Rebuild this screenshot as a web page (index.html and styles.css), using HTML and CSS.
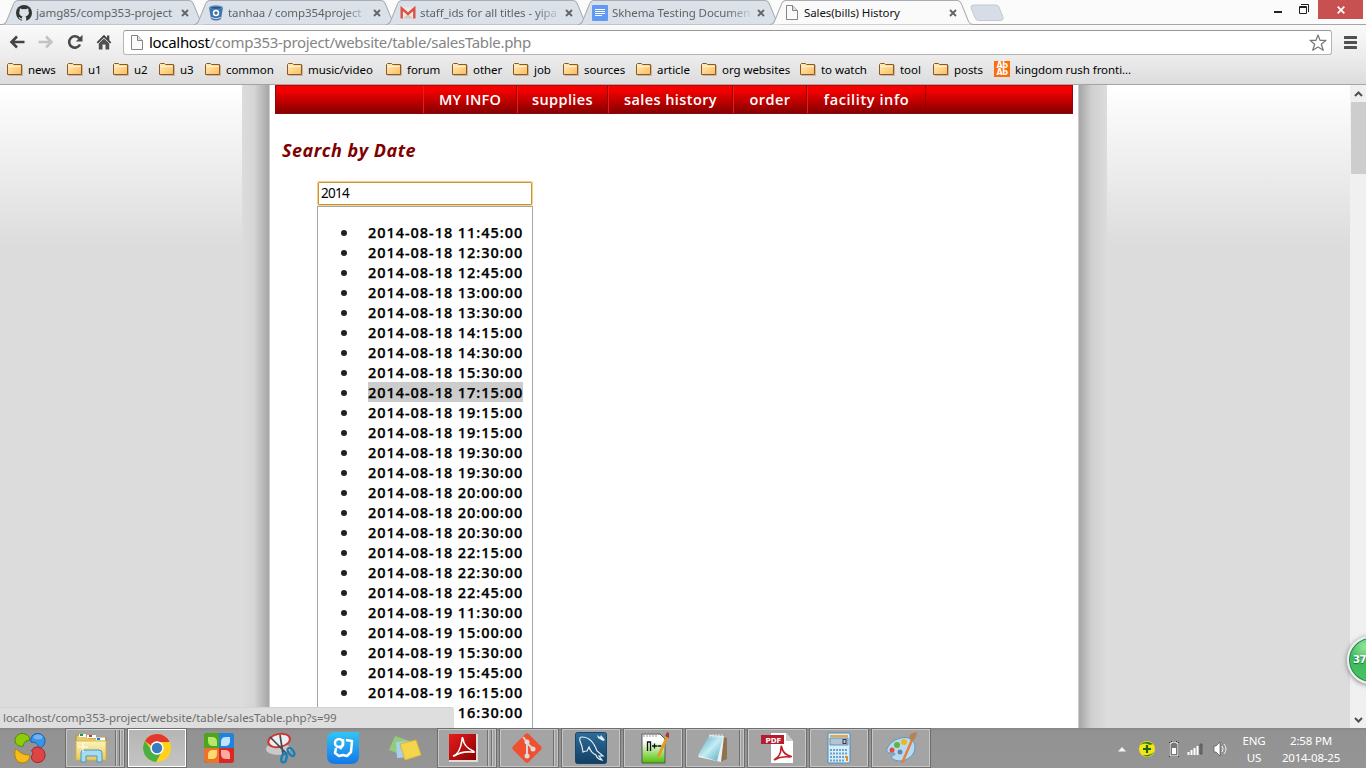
FILE: index.html
```html
<!DOCTYPE html>
<html lang="en">
<head>
<meta charset="utf-8">
<title>Sales(bills) History</title>
<link rel="stylesheet" href="styles.css">
</head>
<body>
<svg class="defs" width="0" height="0" aria-hidden="true">
  <defs>
    <linearGradient id="gFolder" x1="0" y1="0" x2="1" y2="1"><stop offset="0" stop-color="#ffeec0"/><stop offset="1" stop-color="#fdbb5c"/></linearGradient>
    <linearGradient id="gYellow" x1="0" y1="0" x2="0" y2="1"><stop offset="0" stop-color="#fdf3bd"/><stop offset="1" stop-color="#e8c95a"/></linearGradient>
    <linearGradient id="gBlue" x1="0" y1="0" x2="0" y2="1"><stop offset="0" stop-color="#31c4f5"/><stop offset="1" stop-color="#1478e8"/></linearGradient>
    <linearGradient id="gRed" x1="0" y1="0" x2="1" y2="1"><stop offset="0" stop-color="#e81d1d"/><stop offset="1" stop-color="#8a0000"/></linearGradient>
    <linearGradient id="gNavy" x1="0" y1="0" x2="0" y2="1"><stop offset="0" stop-color="#2c6d9c"/><stop offset="1" stop-color="#123f62"/></linearGradient>
    <linearGradient id="gGreen" x1="0" y1="0" x2="0" y2="1"><stop offset=".25" stop-color="#fff"/><stop offset="1" stop-color="#4fc100"/></linearGradient>
    <linearGradient id="gTeal" x1="0" y1="0" x2="1" y2="1"><stop offset="0" stop-color="#4d9db2"/><stop offset=".5" stop-color="#c5edf5"/><stop offset="1" stop-color="#4fa5b8"/></linearGradient>
    <symbol id="folder" viewBox="0 0 16 14"><path d="M.5 12.5v-10l1-1h4l1 1h8v10z" fill="url(#gFolder)" stroke="#8a5a25"/><path d="M1.5 4.5h12" stroke="#fff3d2"/><path d="M15.5 3v10.5h-14" fill="none" stroke="#b69a79" opacity=".6"/></symbol>
    <symbol id="page" viewBox="0 0 12 15"><path d="M.5.5h6l5 5v9H.5z" fill="#fafafa" stroke="#858585"/><path d="M6.5.5v5h5" fill="#ddd" stroke="#858585"/></symbol>
    <symbol id="close" viewBox="0 0 8 8"><path d="M1 1l6 6M7 1L1 7" stroke="#636363" stroke-width="1.8"/></symbol>
    <symbol id="tab" viewBox="0 0 202 25" preserveAspectRatio="none"><path d="M0 24.5C3 24.5 4 23 5 20L11 5C12 2 13 .5 16 .5H185C188 .5 189 2 190 5L196 20C197 23 198 24.5 202 24.5"/></symbol>
  </defs>
</svg>
<div class="screen">
  <header class="tabs">
    <div class="tab"><svg class="shape"><use href="#tab"/></svg>
      <svg class="fav" viewBox="0 0 16 16"><circle cx="8" cy="8" r="8" fill="#333"/><path d="M4 3.2l2 1q2-.5 4 0l2-1q.8 1.500.3 2.700 1 1.300.4 3.200-.7 2-3.200 2.300.8.8.7 2v2.400q-2.200.6-4.400 0v-1.500q-2 .5-2.600-1.200l-.7-1q1.200-.2 1.800 1 .7.600 1.500.1.100-1 .7-1.800-2.500-.4-3.100-2.300-.5-2 .4-3.200-.4-1.400.2-2.700z" fill="#dbe1e9"/></svg>
      <span class="label">jamg85/comp353-project</span><svg class="x"><use href="#close"/></svg></div>
    <div class="tab"><svg class="shape"><use href="#tab"/></svg>
      <svg class="fav" viewBox="0 0 16 16"><path d="M1 2.500L3 14q5 3 10 0l2-11.500z" fill="#3e73ac"/><ellipse cx="8" cy="2.500" rx="7" ry="2.200" fill="#5e8fc2"/><ellipse cx="8" cy="2.700" rx="5" ry="1" fill="#245488"/><circle cx="8" cy="8" r="2.500" fill="#3e73ac" stroke="#fff" stroke-width="1.500"/><path d="M3 12.500q5 2.500 10 0" fill="none" stroke="#dbe1e9"/></svg>
      <span class="label faded">tanhaa / comp354project</span><svg class="x"><use href="#close"/></svg></div>
    <div class="tab"><svg class="shape"><use href="#tab"/></svg>
      <svg class="fav" viewBox="0 0 16 16"><path d="M1 2.500h14v11H1z" fill="#eee9e2"/><path d="M3 13.500l5-5 5 5z" fill="#d2ccc0"/><path d="M1.700 13.500V3.500L8 9l6.300-5.500v10" fill="none" stroke="#dc5145" stroke-width="2.400"/></svg>
      <span class="label faded">staff_ids for all titles - yipa</span><svg class="x"><use href="#close"/></svg></div>
    <div class="tab"><svg class="shape"><use href="#tab"/></svg>
      <svg class="fav" viewBox="0 0 16 16"><rect width="16" height="16" rx="1" fill="#6199f3"/><path d="M3 4.500h10M3 6.500h10M3 8.500h10M3 10.500h7" stroke="#fff"/></svg>
      <span class="label faded">Skhema Testing Documen</span><svg class="x"><use href="#close"/></svg></div>
    <div class="tab active"><svg class="shape"><use href="#tab"/></svg>
      <svg class="fav narrow"><use href="#page"/></svg>
      <span class="label">Sales(bills) History</span><svg class="x"><use href="#close"/></svg></div>
    <svg class="newtab" viewBox="0 0 34 18"><path d="M4 1h22q2 0 3 2l4 10q1 3-2 3.500H9q-3 0-4-3L1 4Q.5 1 4 1z" fill="#d6dde7" stroke="#c5cad1"/></svg>
    <div class="window">
      <svg class="min" viewBox="0 0 8 2"><path d="M0 1h8" stroke="#222" stroke-width="2"/></svg>
      <svg class="restore" viewBox="0 0 10 10"><path d="M2 .5h7.500V8M.5 2.500h7v7h-7z" fill="none" stroke="#222"/><path d="M0 3.500h8" stroke="#222"/></svg>
      <span class="closewin"><svg viewBox="0 0 8 8"><path d="M.7.7l6.600 6.600M7.300.7L.7 7.300" stroke="#fff" stroke-width="1.700"/></svg></span>
    </div>
  </header>

  <div class="toolbar">
    <svg class="tool" viewBox="0 0 16 16"><path d="M15.500 8H3M8 2.500L2.500 8 8 13.500" fill="none" stroke="#444" stroke-width="2.600"/></svg>
    <svg class="tool" viewBox="0 0 16 16"><path d="M.5 8H13M8 2.500L13.500 8 8 13.500" fill="none" stroke="#c3c3c3" stroke-width="2.600"/></svg>
    <svg class="tool" viewBox="0 0 16 16"><path d="M13 10.500A5.700 5.700 0 1 1 12.400 4.500" fill="none" stroke="#4a4a4a" stroke-width="2.600"/><path d="M15.500.7V7.400H8.800z" fill="#4a4a4a"/></svg>
    <svg class="tool home" viewBox="0 0 16 16"><path d="M8 .8L.7 8.300l1.200 1.200L8 3.600l6.100 5.900 1.200-1.200-2-2V1.500h-2.200V4z" fill="#444"/><path d="M2.800 9.500L8 4.600l5.200 4.900v6H9.500v-5h-3v5H2.800z" fill="#505050"/></svg>
    <div class="omnibox"><svg class="pageicon"><use href="#page"/></svg><span class="url"><b>localhost</b>/comp353-project/website/table/salesTable.php</span>
      <svg class="star" viewBox="0 0 18 18"><path d="M9 1l2 5.300h6l-4.700 3.900 2 6.100L9 13l-5.300 3.300 2-6.100L1 6.300h6z" fill="#fff" stroke="#777" stroke-width="1.200" stroke-linejoin="round"/></svg></div>
    <svg class="menu" viewBox="0 0 13 13"><path d="M1 1.500h11M1 6.500h11M1 11.500h11" stroke="#505050" stroke-width="3" stroke-linecap="round"/></svg>
  </div>

  <nav class="bookmarks">
    <span><svg><use href="#folder"/></svg>news</span><span><svg><use href="#folder"/></svg>u1</span><span><svg><use href="#folder"/></svg>u2</span><span><svg><use href="#folder"/></svg>u3</span><span><svg><use href="#folder"/></svg>common</span><span><svg><use href="#folder"/></svg>music/video</span><span><svg><use href="#folder"/></svg>forum</span><span><svg><use href="#folder"/></svg>other</span><span><svg><use href="#folder"/></svg>job</span><span><svg><use href="#folder"/></svg>sources</span><span><svg><use href="#folder"/></svg>article</span><span><svg><use href="#folder"/></svg>org websites</span><span><svg><use href="#folder"/></svg>to watch</span><span><svg><use href="#folder"/></svg>tool</span><span><svg><use href="#folder"/></svg>posts</span><span><i class="abab">Ab<br>Ab</i>kingdom rush fronti...</span>
  </nav>

  <div class="viewport">
    <div class="side"></div>
    <div class="center">
      <main class="sheet">
        <nav class="mainmenu"><a>MY INFO</a><a>supplies</a><a>sales history</a><a>order</a><a>facility info</a></nav>
        <h2>Search by Date</h2>
        <div class="search">2014</div>
        <ul class="results">
          <li><a>2014-08-18 11:45:00</a></li><li><a>2014-08-18 12:30:00</a></li><li><a>2014-08-18 12:45:00</a></li><li><a>2014-08-18 13:00:00</a></li><li><a>2014-08-18 13:30:00</a></li><li><a>2014-08-18 14:15:00</a></li><li><a>2014-08-18 14:30:00</a></li><li><a>2014-08-18 15:30:00</a></li><li><a class="hover">2014-08-18 17:15:00</a></li><li><a>2014-08-18 19:15:00</a></li><li><a>2014-08-18 19:15:00</a></li><li><a>2014-08-18 19:30:00</a></li><li><a>2014-08-18 19:30:00</a></li><li><a>2014-08-18 20:00:00</a></li><li><a>2014-08-18 20:00:00</a></li><li><a>2014-08-18 20:30:00</a></li><li><a>2014-08-18 22:15:00</a></li><li><a>2014-08-18 22:30:00</a></li><li><a>2014-08-18 22:45:00</a></li><li><a>2014-08-19 11:30:00</a></li><li><a>2014-08-19 15:00:00</a></li><li><a>2014-08-19 15:30:00</a></li><li><a>2014-08-19 15:45:00</a></li><li><a>2014-08-19 16:15:00</a></li><li><a>2014-08-19 16:30:00</a></li><li><a>2014-08-19 18:00:00</a></li>
        </ul>
      </main>
    </div>
    <div class="side right"></div>
    <div class="scrollbar"><svg viewBox="0 0 9 6"><path d="M1 5l3.500-3.500L8 5" fill="none" stroke="#505050" stroke-width="2"/></svg><div class="thumb"></div><svg class="down" viewBox="0 0 9 6"><path d="M1 1l3.500 3.500L8 1" fill="none" stroke="#505050" stroke-width="2"/></svg></div>
    <div class="status">localhost/comp353-project/website/table/salesTable.php?s=99</div>
    <div class="ball">37</div>
  </div>

  <footer class="taskbar">
    <div class="apps">
      <div class="app left"><svg viewBox="0 0 32 32"><path d="M8 1.500c5 0 8 3 7.500 7-4 0-6 2-6 5.500C5 15.500 1 12 1 8.500 1 5 4 1.500 8 1.500z" fill="#8ecb08" stroke="#4b8a0c"/><path d="M23.500 1.500c4 0 7.500 3 7.500 7 0 5-3 7.500-6.500 7.500 0-4-3-6-7.500-6-1-4.500 2-8.500 6.500-8.500z" fill="#3794ea" stroke="#165fae"/><path d="M1.500 17c3.500 1 4.500 6 14 6 1 3-2 8-7 8-7 0-9-8-7-14z" fill="#f6bd16" stroke="#b87f0b"/><path d="M23.500 15c4 0 7.500 3.500 7.500 8s-3 7.500-7.500 7.500c-4 0-6.500-3-6-6.500 1.500-1 2-4.500 0-5 1-2.500 3-4 6-4z" fill="#dd4545" stroke="#9b2525"/><ellipse cx="24" cy="5" rx="4.500" ry="2.500" fill="#fff" opacity=".3"/></svg></div>
      <div class="app open stack2"><svg viewBox="0 0 32 32"><path d="M1 3h10l2 3h18v22H1z" fill="#e6ca6d" stroke="#a88e3c"/><path d="M4 3.500h7M12 4.500h9M21 7h9" stroke="#fff" stroke-width="3"/><path d="M5 3h3" stroke="#1a9c46" stroke-width="2"/><path d="M14 4h3" stroke="#c33" stroke-width="2"/><path d="M22 7h3" stroke="#1d7dcc" stroke-width="2"/><path d="M1 9h30v19H1z" fill="url(#gYellow)" stroke="#d6b854"/><path d="M6 30v-9q0-3 3-3h15q3 0 3 3v9h-5v-6H11v6z" fill="#a5dcf1" stroke="#4897bb"/><path d="M8 10v10M3 15h10" stroke="#fff"/></svg></div>
      <div class="app open active"><svg viewBox="0 0 32 32"><circle cx="16" cy="16" r="14" fill="#ffd21c"/><path d="M3.900 9A14 14 0 0 1 28.600 10H16a6 6 0 0 0-5.500 4z" fill="#e1392d"/><path d="M3.900 9A14 14 0 0 0 15 30l5.500-10a6 6 0 0 1-9.500-1.500z" fill="#4caf45"/><circle cx="16" cy="16" r="6.700" fill="#fff"/><circle cx="16" cy="16" r="5.200" fill="#377bc0"/></svg></div>
      <div class="app"><svg viewBox="0 0 32 32"><rect x="1" y="1" width="30" height="30" rx="4" fill="#176d15"/><path d="M4 1h12v15H1V5q0-4 3-4z" fill="#4da51e"/><path d="M16 1h12q3 0 3 3v12H16z" fill="#2083dd"/><path d="M1 16h15v15H5q-4 0-4-4z" fill="#e9752d"/><path d="M16 16h15v12q0 3-3 3H16z" fill="#d92923"/><path d="M5 5h4q5 0 5 5v4h-4q-5 0-5-5z" fill="#b5e86b"/><path d="M27 5h-4q-5 0-5 5v4h4q5 0 5-5z" fill="#bfe4ff"/><path d="M5 27v-4q0-5 5-5h4v4q0 5-5 5z" fill="#ffd873"/><path d="M27 27v-4q0-5-5-5h-4v4q0 5 5 5z" fill="#ffaaa2"/></svg></div>
      <div class="app"><svg viewBox="0 0 32 32"><ellipse cx="13" cy="17" rx="12" ry="6" fill="#c9c9c9"/><ellipse cx="14" cy="8.500" rx="11" ry="6.500" fill="#eee" stroke="#cf3634" stroke-width="2" transform="rotate(-12 14 8)"/><path d="M5 5l17 17M15 3l3 19" stroke="#424b55" stroke-width="1.700"/><ellipse cx="26" cy="20" rx="2.500" ry="4.500" fill="none" stroke="#187eb7" stroke-width="2.300" transform="rotate(-35 26 20)"/><ellipse cx="19" cy="26" rx="2.500" ry="4.500" fill="none" stroke="#187eb7" stroke-width="2.300" transform="rotate(12 19 26)"/></svg></div>
      <div class="app"><svg viewBox="0 0 32 32"><path d="M8 0h24v24q0 8-8 8H8q-8 0-8-8V8q0-8 8-8z" fill="url(#gBlue)"/><circle cx="12" cy="11" r="4" fill="none" stroke="#fff" stroke-width="2.500"/><path d="M16 7v6l-3 4M9 16l-1 5 4 3 4-1 4 1 4-4 1-11-6-1" fill="none" stroke="#fff" stroke-width="2.500" stroke-linejoin="round"/></svg></div>
      <div class="app"><svg viewBox="0 0 32 32"><path d="M6 4l15 5-5 15L0 18z" fill="#91cc79"/><path d="M7 10l15-1 1 16-15 1z" fill="#a7d0f0"/><path d="M11 12l16-4 5 15-16 5z" fill="#f3d64d" stroke="#dbb534"/></svg></div>
      <div class="app open stack2"><svg viewBox="0 0 32 32"><path d="M2 2h29v28H2z" fill="#ddd"/><path d="M2 2h27v26H2z" fill="url(#gRed)"/><path d="M6 24q7-2 9-16 0-4 1-1 1 8 10 12 3 2-2 1-9-1-17 4z" fill="none" stroke="#fff" stroke-width="1.600"/></svg></div>
      <div class="app open stack1"><svg viewBox="0 0 32 32"><rect x="5" y="5" width="22" height="22" rx="2" fill="#f0502f" transform="rotate(45 16 16)"/><path d="M12 5l4 5v14M16 11l6 6" stroke="#d8d5d2" stroke-width="2" fill="none"/><circle cx="16" cy="10" r="2.500" fill="#ddd"/><circle cx="22" cy="17" r="2.500" fill="#ddd"/><circle cx="16" cy="24" r="2.500" fill="#ddd"/></svg></div>
      <div class="app open"><svg viewBox="0 0 32 32"><rect x=".5" y=".5" width="31" height="31" rx="2" fill="url(#gNavy)" stroke="#164768"/><path d="M8 20Q7 13 5 9q-1-4 2-4 10 0 15 14l6 5-4 0 3 4q-5-1-6-5-5-2-7-8l-2 4q-2 0-4 1z" fill="none" stroke="#e5eff5" stroke-width="1.200"/><path d="M22 3l3 2 1-2 4 5-2 1-5-3z" fill="#e3edf3"/></svg></div>
      <div class="app open"><svg viewBox="0 0 32 32"><path d="M5 2h18l5 5v24H5z" fill="url(#gGreen)" stroke="#555"/><path d="M7 1v4M10 1v4M13 1v4M16 1v4M19 1v4" stroke="#999"/><path d="M10.500 19v-9h3v9M15 14h5M17.500 11.500v5M20.500 14h4" stroke="#111" stroke-width="1.300" fill="none"/><path d="M21 25L31 3" stroke="#e49d24" stroke-width="3"/><path d="M30 5l2-4" stroke="#a63741" stroke-width="4"/></svg></div>
      <div class="app open stack1"><svg viewBox="0 0 32 32"><path d="M26 5l4 1v21l-7 3z" fill="#8d7350"/><path d="M13 3l14 1-3 26-23-5z" fill="#ecf1f2"/><path d="M12 4l14 1-6 24-19-6z" fill="url(#gTeal)"/><path d="M13 2v4M16 2v4M19 2v4M22 2v4M25 2v4" stroke="#e5e5e5"/></svg></div>
      <div class="app open"><svg viewBox="0 0 32 32"><path d="M10 1h15l7 8v22H10z" fill="#fff"/><path d="M25 1v8h7z" fill="#ccc"/><path d="M0 3h23v9H0z" fill="#b51c2d"/><text x="4.500" y="10.500" class="pdf">PDF</text><path d="M13 28q7-4 7-12 0-4 1 0 1 6 8 8 3 1-1 1-8-1-15 3z" fill="none" stroke="#c01f26" stroke-width="1.600"/></svg></div>
      <div class="app open"><svg viewBox="0 0 32 32"><rect x="5" y="1" width="22" height="30" rx="1" fill="#d9edf8" stroke="#4c8cbc"/><path d="M7 4h18" stroke="#f0a634" stroke-width="2"/><path d="M7 6h18v7H7z" fill="#adc6d8" stroke="#6c8fa6"/><rect x="20" y="7.500" width="3" height="4" fill="none" stroke="#435"/><path d="M7 18h18M7 21.500h18M7 25h18M7 28.500h14" stroke="#6aa3cc" stroke-width="1.800" stroke-dasharray="2 1"/><path d="M24 24v5" stroke="#ef8b1b" stroke-width="2"/></svg></div>
      <div class="app open"><svg viewBox="0 0 32 32"><path d="M16 6c8-2 14 2 14 9 0 9-8 14-16 14-8-1-9-5-5-6 3-1 0-3-5-2C-2 20 5 8 16 6z" fill="#b8daf1" stroke="#5799c9"/><circle cx="7" cy="18" r="2.500" fill="#e54c40"/><circle cx="12" cy="13" r="3" fill="#63b43c"/><circle cx="19" cy="10" r="3" fill="#f4b51c"/><circle cx="15" cy="20" r="2.500" fill="#6488af"/><path d="M17 31L27 8" stroke="#e1823c" stroke-width="2.500"/><path d="M26 9q-3-5 0-7 5-3 6-1-1 7-6 8z" fill="#b58356"/></svg></div>
    </div>
    <div class="tray">
      <svg class="up" viewBox="0 0 8 5"><path d="M4 0l4 4.500H0z" fill="#f4f4f4"/></svg>
      <svg class="shield" viewBox="0 0 16 16"><circle cx="8" cy="8" r="8" fill="#f5e414"/><path d="M1 4q6-6 13-1l-3 1Q6 1 1 4zM15 11q-5 7-12 3 7 1 12-3z" fill="#32811d"/><path d="M8 4v8M4 8h8" stroke="#176319" stroke-width="2.200"/></svg>
      <svg class="battery" viewBox="0 0 10 16"><path d="M3 2V.7h4V2h2v13H1V2z" fill="#777" stroke="#333" stroke-width="2"/><path d="M3 2V1h4v1h2v13H1V2z" fill="#777" stroke="#fff"/><path d="M3 7h4v6H3z" fill="#fff"/></svg>
      <svg class="signal" viewBox="0 0 16 12"><path d="M1.500 9v3M4.500 7v5M7.500 5v7M10.500 3v9" stroke="#fff" stroke-width="2"/><path d="M13 1h2v10h-2z" fill="#777" stroke="#555"/></svg>
      <svg class="speaker" viewBox="0 0 14 16"><path d="M1 5h2l4-4v14l-4-4H1z" fill="#fff" stroke="#555" stroke-width=".7"/><path d="M9 5q2 3 0 6M11 3q4 5 0 10" stroke="#eee" fill="none"/></svg>
      <div class="lang">ENG<br>US</div>
      <div class="clock">2:58 PM<br>2014-08-25</div>
    </div>
  </footer>
</div>
</body>
</html>
```
FILE: styles.css
```css
* { box-sizing: border-box; }
body { margin: 0; font-family: "Noto Sans", "Open Sans", sans-serif; overflow: hidden; }
svg { display: block; flex: none; }
.defs { position: absolute; }
.screen { width: 1366px; height: 768px; display: flex; flex-direction: column; overflow: hidden; }

.tabs { flex: none; height: 25px; background: #fbfbfb; border-bottom: 1px solid #a6a6a6; display: flex; padding-left: 2px; }
.tab { position: relative; width: 204px; height: 25px; margin-right: -12px; padding: 0 17px 0 14px; display: flex; align-items: center; flex: none; }
.tab .shape { position: absolute; inset: 0; width: 204px; height: 25px; fill: #dbe1e9; stroke: #a9adb3; }
.tab.active { z-index: 2; }
.tab.active .shape { fill: #fafafa; }
.fav { position: relative; width: 16px; height: 16px; margin-top: 1px; }
.fav.narrow { width: 12px; height: 15px; margin: 0 2px; }
.label { position: relative; margin-left: 4px; width: 140px; height: 18px; line-height: 18px; font-size: 11.5px; white-space: nowrap; color: #626262; margin-top: 1px; }
.label.faded { width: 140px; letter-spacing: -.1px; -webkit-mask-image: linear-gradient(90deg, #000 116px, transparent 142px); mask-image: linear-gradient(90deg, #000 116px, transparent 142px); }
.active .label { color: #111; letter-spacing: -.1px; }
.x { position: relative; width: 8px; height: 8px; margin: 1px 0 0 auto; }
.newtab { width: 34px; height: 18px; margin: 4px 0 0 8px; }
.window { margin-left: auto; display: flex; align-items: flex-start; }
.min { width: 8px; height: 2px; margin: 11px 17px 0 0; }
.restore { width: 10px; height: 10px; margin: 4px 9px 0 0; }
.closewin { width: 45px; height: 19px; background: #c75050; margin-right: 3px; display: flex; align-items: center; justify-content: center; }
.closewin svg { width: 8px; height: 8px; }

.toolbar { flex: none; height: 32px; padding: 0 9px; background: linear-gradient(#fafafa, #ececec); display: flex; align-items: center; }
.tool { width: 16px; height: 16px; margin-right: 13px; margin-top: 2px; }
.tool.home { margin-right: 11px; }
.omnibox { width: 1209px; height: 25px; margin-top: 3px; border: 1px solid #b4b4b4; border-top-color: #999; border-radius: 3px; background: #fff; display: flex; align-items: center; padding: 0 4px 0 7px; }
.pageicon { width: 12px; height: 15px; }
.url { margin-left: 6px; font-size: 15px; line-height: 22px; color: #858585; letter-spacing: -.31px; white-space: nowrap; padding-bottom: 2px; }
.url b { font-weight: 400; color: #000; }
.star { width: 18px; height: 18px; margin-left: auto; }
.menu { width: 13px; height: 13px; margin: 3px 0 0 12px; }

.bookmarks { flex: none; height: 28px; padding-left: 7px; background: linear-gradient(#ececec, #dcdcdc); border-bottom: 1px solid #a5a5a5; display: grid; grid-template-columns: 60px 46px 46px 46px 82px 99px 66px 61px 50px 73px 65px 99px 79px 54px 61px 160px; }
.bookmarks span { display: flex; align-items: center; gap: 5px; font-size: 11.5px; letter-spacing: -.06px; color: #000; white-space: nowrap; padding-bottom: 3px; }
.bookmarks svg { width: 16px; height: 14px; }
.abab { width: 16px; height: 16px; background: #ff6c0a; color: #fff; font: bold 8px/7px "DejaVu Sans", sans-serif; padding-top: 1px; text-align: center; letter-spacing: -.5px; }

.viewport { position: relative; flex: none; height: 643px; display: flex; background: #dcdcdc; overflow: hidden; }
.side { width: 242px; background: linear-gradient(#fff, #dcdcdc 162px); }
.side.right { width: 243px; }
.center { width: 865px; padding: 0 28px 0 27px; background: linear-gradient(90deg, #dcdcdc, #d5d5d5 12px, #a6a6a6 27px, #a6a6a6 837px, #d0d0d0 850px, #dcdcdc); }
.sheet { width: 810px; height: 643px; background: #fff; border: 1px solid #ccc; border-width: 0 1px; padding: 0 5px; font-family: "Open Sans", "Noto Sans", sans-serif; }
.mainmenu { height: 29px; background: linear-gradient(#f90000, #ec0000 6px, #940000 24px, #8a0000); border: 1px solid #8d0711; border-top-color: #c00; display: flex; padding-left: 147px; }
.mainmenu a { height: 27px; line-height: 28px; border-left: 1px solid #e91b1b; border-right: 1px solid #930000; color: #fff; font-size: 14.5px; font-weight: 600; letter-spacing: .42px; text-align: center; white-space: nowrap; }
.mainmenu a:nth-child(1) { width: 94px; letter-spacing: .2px; }
.mainmenu a:nth-child(2) { width: 91px; }
.mainmenu a:nth-child(3) { width: 125px; }
.mainmenu a:nth-child(4) { width: 74px; }
.mainmenu a:nth-child(5) { width: 119px; letter-spacing: .6px; }
h2 { margin: 21px 0 0 7px; font-size: 18px; line-height: 30px; font-style: italic; color: #800000; letter-spacing: .5px; }
.search { margin: 17px 0 0 43px; width: 214px; height: 23px; border: 1px solid #c89536; box-shadow: 0 0 1px 1px #f2cc82; border-radius: 1px; padding-left: 2px; font: 13.5px/21px "Noto Sans", sans-serif; letter-spacing: -.7px; }
.results { margin: 1px 0 0 42px; width: 216px; height: 660px; border: 1px solid #a2a8b0; padding: 15px 0 0 50px; list-style: none; }
.results li { position: relative; height: 20px; line-height: 22px; font-size: 14.5px; font-weight: 600; letter-spacing: .95px; white-space: nowrap; }
.results li::before { content: ""; position: absolute; left: -27px; top: 8px; width: 6px; height: 6px; border-radius: 50%; background: #202020; }
.results a { display: block; width: 155px; height: 20px; color: #000; -webkit-text-stroke: .25px #000; }
.results .hover { background: #ccc; }
.scrollbar { width: 16px; background: #f0f0f0; display: flex; flex-direction: column; align-items: center; padding-top: 6px; flex: none; }
.scrollbar svg { width: 9px; height: 6px; }
.thumb { width: 15px; height: 72px; margin-top: 5px; background: #cdcdcd; }
.scrollbar .down { margin: auto 0 5px; }
.status { position: absolute; left: 0; bottom: 0; width: 454px; height: 21px; line-height: 19px; padding-left: 3px; font-size: 11.5px; letter-spacing: -.04px; color: #6d6d6d; background: #dedede; border-radius: 0 3px 0 0; border-top: 1px solid #d3d3d3; }
.ball { position: absolute; left: 1347px; top: 551px; width: 48px; height: 48px; border-radius: 50%; border: 2px solid #eee; background: radial-gradient(circle at 35% 20%, #91e49b, #3fba59 35%, #48c465 80%, #208445); box-shadow: 0 1px 5px #777, inset 0 0 0 1px #277d5a; color: #fff; font: bold 10px/44px "DejaVu Sans", sans-serif; padding-left: 4px; letter-spacing: -.5px; text-shadow: 0 1px 1px #165; }

.taskbar { flex: none; height: 40px; background: linear-gradient(#858585, #929292 3px, #959595); display: flex; }
.apps { display: grid; grid-template-columns: repeat(15, 58px); column-gap: 4px; padding-left: 4px; flex: none; }
.app { display: flex; align-items: center; justify-content: center; height: 39px; }
.app svg { width: 32px; height: 32px; }
.app.left { padding-right: 6px; }
.app.open { background: #a4a4a4; border: 1px solid #c6c6c6; box-shadow: 0 0 0 1px #6e6e6e; margin-top: 1px; height: 38px; }
.app.active { background: linear-gradient(#b5b5b5, #c4c4c4); border-color: #fff; }
.app.stack1 { padding-right: 5px; background: linear-gradient(90deg, transparent 52px, #707070 52px, #707070 53px, #c6c6c6 53px, #c6c6c6 54px, transparent 54px), #a4a4a4; }
.app.stack2 { padding-right: 8px; background: linear-gradient(90deg, transparent 48px, #707070 48px, #707070 49px, #c6c6c6 49px, #c6c6c6 50px, transparent 50px, transparent 52px, #707070 52px, #707070 53px, #c6c6c6 53px, #c6c6c6 54px, transparent 54px), #a4a4a4; }
.pdf { font: bold 7px "DejaVu Sans", sans-serif; fill: #fff; }
.tray { flex: 1; display: flex; align-items: center; justify-content: flex-end; padding-top: 2px; }
.up { width: 8px; height: 5px; margin-right: 13px; }
.shield { width: 16px; height: 16px; margin-right: 14px; }
.battery { width: 10px; height: 16px; margin-right: 8px; }
.signal { width: 16px; height: 12px; margin-right: 10px; }
.speaker { width: 14px; height: 16px; margin-right: 13px; }
.lang, .clock { color: #fff; font-size: 11.5px; line-height: 17px; text-align: center; letter-spacing: -.2px; }
.lang { width: 28px; margin-right: 10px; }
.clock { width: 66px; margin-right: 22px; }
```
